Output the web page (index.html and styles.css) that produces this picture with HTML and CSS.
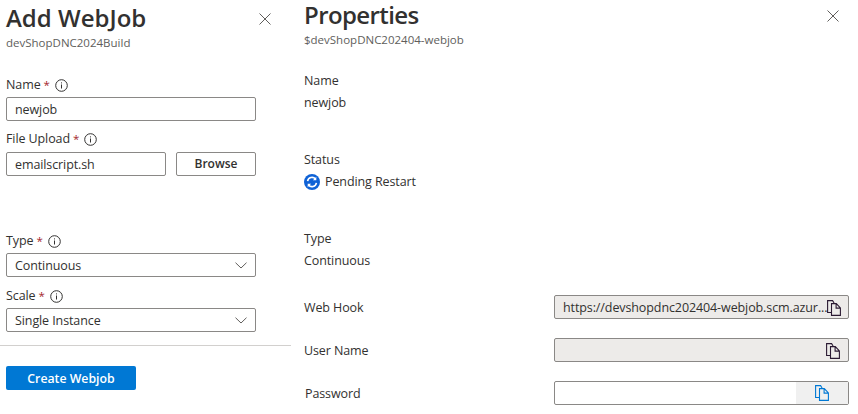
FILE: index.html
```html
<!DOCTYPE html>
<html lang="en">
<head>
<meta charset="utf-8">
<title>Add WebJob</title>
<link rel="stylesheet" href="styles.css">
</head>
<body>
<svg class="defs" width="0" height="0" aria-hidden="true">
  <defs>
    <symbol id="info" viewBox="0 0 13 13"><circle cx="6.5" cy="6.5" r="5.8" fill="none" stroke="currentColor"/><rect x="6" y="5.5" width="1" height="4" fill="currentColor"/><rect x="6" y="3.4" width="1" height="1" fill="currentColor"/></symbol>
    <symbol id="close" viewBox="0 0 12 12"><path d="M.5.5l11 11M11.500.5l-11 11" fill="none" stroke="currentColor" stroke-width="1"/></symbol>
    <symbol id="chev" viewBox="0 0 12 7"><path d="M.5.7L6 6l5.500-5.300" fill="none" stroke="currentColor"/></symbol>
    <symbol id="copy" viewBox="0 0 14 16"><path d="M4.500 12.500H.6V.6h5l1.500 2.400" fill="none" stroke="currentColor" stroke-width="1.100"/><path d="M4.500 3.600h4.800l4.100 4.300v7.500H4.500zM9.100 3.600v4.500h4.300" fill="none" stroke="currentColor" stroke-width="1.100"/></symbol>
  </defs>
</svg>
<main class="page">
  <section class="add">
    <header class="add-head">
      <div>
        <h1 class="title t-add">Add WebJob</h1>
        <p class="sub">devShopDNC2024Build</p>
      </div>
      <svg class="close add-close"><use href="#close"/></svg>
    </header>
    <form class="form">
      <label class="label lab-name">Name <span class="req">*</span><svg class="info"><use href="#info"/></svg></label>
      <div class="field full">newjob</div>
      <label class="label lab-file">File Upload <span class="req">*</span><svg class="info"><use href="#info"/></svg></label>
      <div class="file-row">
        <div class="field file">emailscript.sh</div>
        <button class="browse" type="button">Browse</button>
      </div>
      <label class="label lab-type">Type <span class="req">*</span><svg class="info"><use href="#info"/></svg></label>
      <div class="field full select">Continuous<svg class="chev"><use href="#chev"/></svg></div>
      <label class="label lab-scale">Scale <span class="req">*</span><svg class="info"><use href="#info"/></svg></label>
      <div class="field full select">Single Instance<svg class="chev"><use href="#chev"/></svg></div>
    </form>
    <hr class="rule">
    <button class="create" type="button">Create Webjob</button>
  </section>
  <section class="props">
    <header class="props-head">
      <div>
        <h1 class="title t-props">Properties</h1>
        <p class="sub sub-props">$devShopDNC202404-webjob</p>
      </div>
      <svg class="close"><use href="#close"/></svg>
    </header>
    <div class="prop p-name"><div class="k">Name</div><div class="v">newjob</div></div>
    <div class="prop p-status">
      <div class="k">Status</div>
      <div class="v status">
        <svg class="sync" viewBox="0 0 16 16"><circle cx="8" cy="8" r="8" fill="#0f62d6"/><path d="M3.600 7.200A4.500 4.500 0 0 1 11.500 5M12.400 8.800A4.500 4.500 0 0 1 4.500 11" fill="none" stroke="#fff" stroke-width="1.600"/><path d="M12.300 2.800v3.400H8.900zM3.700 13.200V9.800h3.400z" fill="#fff"/></svg>
        Pending Restart
      </div>
    </div>
    <div class="prop p-type"><div class="k">Type</div><div class="v">Continuous</div></div>
    <div class="row r-hook">
      <span class="rk">Web Hook</span>
      <div class="ro"><span class="ro-text">https://devshopdnc202404-webjob.scm.azur...</span><svg class="copy"><use href="#copy"/></svg></div>
    </div>
    <div class="row r-user">
      <span class="rk">User Name</span>
      <div class="ro"><span class="ro-text"></span><svg class="copy"><use href="#copy"/></svg></div>
    </div>
    <div class="row r-pass">
      <span class="rk pass">Password</span>
      <div class="ro pw"><span class="ro-text"></span><span class="copy-btn"><svg class="copy blue"><use href="#copy"/></svg></span></div>
    </div>
  </section>
</main>
</body>
</html>
```
FILE: styles.css
```css
* { box-sizing: border-box; }
html, body { margin: 0; padding: 0; }
body {
  width: 858px;
  height: 414px;
  overflow: hidden;
  background: #fff;
  color: #323130;
  font-family: "Open Sans", "Noto Sans", "Liberation Sans", sans-serif;
  font-size: 12.500px;
  letter-spacing: -0.1px;
  line-height: 18px;
}
.defs { position: absolute; }
.page { display: flex; }
.add { width: 291px; flex: none; }
.props { width: 545px; margin-left: 13px; flex: none; }

.add-head { display: flex; justify-content: space-between; padding: 2px 20px 0 6px; align-items: flex-start; }
.props-head { display: flex; justify-content: space-between; align-items: flex-start; padding-right: 10px; }
.title { margin: 0; font-size: 24px; line-height: 32px; font-weight: 600; }
.t-add { letter-spacing: 0; }
.t-props { letter-spacing: -0.6px; line-height: 30px; }
.sub { margin: 1px 0 0; font-size: 11.500px; line-height: 16px; color: #605e5c; letter-spacing: 0; }
.sub-props { margin-top: 2px; }
.close { width: 12px; height: 12px; color: #605e5c; margin-top: 10px; }
.add-close { margin-top: 11px; }

.form { padding-left: 6px; width: 256px; display: flex; flex-direction: column; }
.label { display: flex; align-items: center; height: 18px; }
.req { color: #a4262c; margin-left: 3px; font-size: 11.500px; }
.info { width: 13px; height: 13px; margin-left: 5px; color: #323130; }
.lab-name { margin-top: 25px; margin-bottom: 3px; }
.lab-file { margin-top: 9px; margin-bottom: 4px; }
.lab-type { margin-top: 56px; margin-bottom: 3px; }
.lab-scale { margin-top: 10px; margin-bottom: 3px; }
.field {
  height: 24px;
  border: 1px solid #8a8886;
  border-radius: 2px;
  padding: 1px 8px 0;
  line-height: 22px;
  background: #fff;
}
.full { width: 250px; }
.select { display: flex; justify-content: space-between; align-items: center; padding-right: 8px; }
.chev { width: 12px; height: 7px; color: #605e5c; }
.file-row { display: flex; gap: 10px; }
.file { width: 160px; }
.browse {
  width: 80px; height: 24px;
  border: 1px solid #8a8886; border-radius: 2px;
  background: #fff; color: #323130;
  font: 600 12px/22px "Open Sans", "Noto Sans", sans-serif;
  padding: 0;
}
.rule { margin: 13px 0 0; border: 0; border-top: 1px solid #d2d0ce; }
.create {
  display: block;
  margin: 20px 0 0 6px;
  width: 130px; height: 24px;
  border: 0; border-radius: 2px;
  background: #0078d4; color: #fff;
  font: 600 12.300px/22px "Open Sans", "Noto Sans", sans-serif;
  padding: 2px 0 0;
}

.prop { display: flex; flex-direction: column; gap: 4px; }
.p-name { margin-top: 24px; }
.p-status { margin-top: 39px; }
.p-type { margin-top: 39px; }
.status { display: flex; align-items: center; gap: 5px; }
.sync { width: 16px; height: 16px; }

.row { display: flex; align-items: center; height: 24px; }
.r-hook { margin-top: 25px; }
.r-user { margin-top: 19px; }
.r-pass { margin-top: 19px; }
.rk { width: 250px; flex: none; padding-top: 2px; }
.pass { padding-left: 1px; }
.ro {
  width: 295px; height: 24px;
  border: 1px solid #8a8886; border-radius: 2px;
  background: #edebe9;
  display: flex; align-items: center; justify-content: space-between;
  padding: 1px 8px 0;
}
.ro-text { white-space: nowrap; }
.copy { width: 14px; height: 16px; color: #2b1a33; flex: none; }
.pw { background: #fff; padding: 0 0 0 8px; }
.copy-btn { width: 52px; height: 22px; background: #f0f0f0; display: flex; align-items: center; justify-content: center; }
.blue { color: #0078d4; }
```
